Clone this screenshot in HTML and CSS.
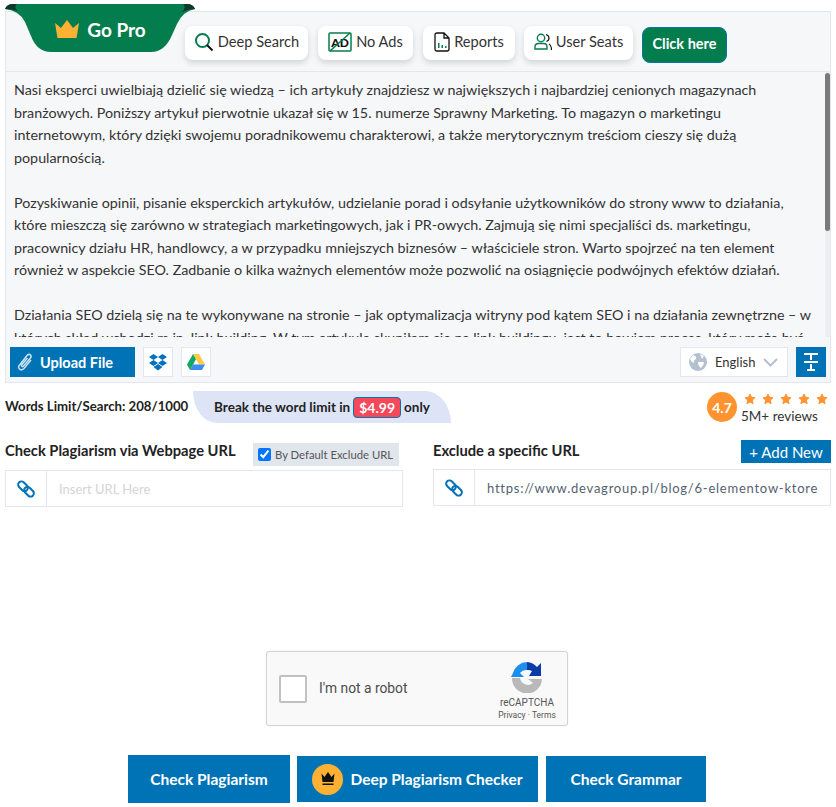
FILE: index.html
```html
<!DOCTYPE html>
<html lang="pl">
<head>
  <meta charset="UTF-8">
  <meta name="viewport" content="width=device-width, initial-scale=1">
  <title>Plagiarism Checker</title>
  <link rel="stylesheet" href="styles.css">
</head>
<body>
  <div class="page">

    <!-- Editor Card -->
    <div class="editor">
      <a class="go-pro" href="#">
        <svg class="go-pro-bg" width="190" height="48" viewBox="0 0 190 48">
          <path d="M0 5 Q2 0 8 0 H182 Q188 0 190 5 Q178 7 172 20 L167 31 Q160 48 146 48 H46 Q32 48 26 32 L20 18 Q15 7 0 5 Z" fill="#047d4e"/>
          <path d="M0 5 Q2 0 8 0 H12 Q8 3 13 7 Q7 5 0 5 Z M190 5 Q188 0 182 0 H178 Q182 3 177 8 Q183 5 190 5 Z" fill="#12372a"/>
        </svg>
        <svg class="go-pro-crown" width="26" height="18" viewBox="0 0 26 18">
          <path d="M1 3 L7 8 L13 0 L19 8 L25 3 L22.500 18 H3.500 Z" fill="#ffb133"/>
        </svg>
        <span>Go Pro</span>
      </a>

      <div class="toolbar">
        <a class="tool tool-search" href="#">
          <svg width="20" height="20" viewBox="0 0 20 20">
            <circle cx="8.500" cy="8.500" r="6.500" fill="none" stroke="#047d4e" stroke-width="2"/>
            <path d="M13 13 L18.500 18.500" stroke="#111" stroke-width="2"/>
          </svg>
          Deep Search
        </a>
        <a class="tool tool-ads" href="#">
          <svg width="24" height="20" viewBox="0 0 24 20">
            <rect x="1" y="1" width="22" height="18" rx="1" fill="#fff" stroke="#047d4e" stroke-width="1.500"/>
            <text x="12" y="14.500" text-anchor="middle" class="ad-mark">AD</text>
            <path d="M2 19 L22 1" stroke="#047d4e" stroke-width="1.500"/>
          </svg>
          No Ads
        </a>
        <a class="tool tool-reports" href="#">
          <svg width="16" height="20" viewBox="0 0 16 20">
            <path d="M1 3 Q1 1 3 1 H10 L15 6 V17 Q15 19 13 19 H3 Q1 19 1 17 Z M10 1 V6 H15" fill="none" stroke="#111" stroke-width="1.300"/>
            <path d="M4 11 H5.500 V16 H4 Z M7.500 13 H9 V16 H7.500 Z M11 14 H12.500 V16 H11 Z" fill="#047d4e"/>
          </svg>
          Reports
        </a>
        <a class="tool tool-seats" href="#">
          <svg width="18" height="18" viewBox="0 0 18 18">
            <circle cx="7" cy="5" r="3.700" fill="none" stroke="#047d4e" stroke-width="1.400"/>
            <path d="M1 16 V14 Q1 10.500 4.500 10.500 H9.500 Q13 10.500 13 14 V16 Z" fill="none" stroke="#047d4e" stroke-width="1.400"/>
            <path d="M12 1.500 Q15 2.500 15 5 Q15 7.500 12.500 8.500 M15 11 Q17.500 12.500 17.500 17" fill="none" stroke="#111" stroke-width="1.200"/>
          </svg>
          User Seats
        </a>
        <a class="click-here" href="#">Click here</a>
      </div>

      <div class="editor-text">
        <p>Nasi eksperci uwielbiają dzielić się wiedzą – ich artykuły znajdziesz w największych i najbardziej cenionych magazynach branżowych. Poniższy artykuł pierwotnie ukazał się w 15. numerze Sprawny Marketing. To magazyn o marketingu internetowym, który dzięki swojemu poradnikowemu charakterowi, a także merytorycznym treściom cieszy się dużą popularnością.</p>
        <p>Pozyskiwanie opinii, pisanie eksperckich artykułów, udzielanie porad i odsyłanie użytkowników do strony www to działania, które mieszczą się zarówno w strategiach marketingowych, jak i PR-owych. Zajmują się nimi specjaliści ds. marketingu, pracownicy działu HR, handlowcy, a w przypadku mniejszych biznesów – właściciele stron. Warto spojrzeć na ten element również w aspekcie SEO. Zadbanie o kilka ważnych elementów może pozwolić na osiągnięcie podwójnych efektów działań.</p>
        <p>Działania SEO dzielą się na te wykonywane na stronie – jak optymalizacja witryny pod kątem SEO i na działania zewnętrzne – w których skład wchodzi m.in. link building. W tym artykule skupiłam się na link buildingu, jest to bowiem proces, który może być</p>
        <div class="scroll-track"><div class="scroll-thumb"></div></div>
      </div>

      <div class="editor-actions">
        <button class="upload-btn" type="button">
          <svg width="16" height="20" viewBox="0 0 16 20">
            <path d="M14 8 L7 16.500 Q4.500 19 2.500 17 Q0.500 15 3 12.500 L10 3.500 Q12 1.500 13.500 3 Q15 4.500 13 6.500 L6.500 14 Q5.500 15 4.800 14.300 Q4 13.500 5 12.500 L10.500 6" fill="none" stroke="#fff" stroke-opacity=".8" stroke-width="1.500"/>
          </svg>
          Upload File
        </button>
        <a class="cloud-btn" href="#">
          <svg width="18" height="17" viewBox="0 0 18 17">
            <path d="M4.500 0 L9 3 L4.500 6 L0 3 Z M13.500 0 L18 3 L13.500 6 L9 3 Z M4.500 6 L9 9 L4.500 12 L0 9 Z M13.500 6 L18 9 L13.500 12 L9 9 Z M4.500 13 L9 10 L13.500 13 L9 16.500 Z" fill="#0070c0"/>
          </svg>
        </a>
        <a class="cloud-btn" href="#">
          <svg width="18" height="16" viewBox="0 0 18 16">
            <path d="M6 0 H12 L18 10.500 H12 Z" fill="#ffcb45"/>
            <path d="M6 0 L9 5.200 L3 16 L0 10.500 Z" fill="#11a861"/>
            <path d="M6 10.500 H18 L15 16 H3 Z" fill="#3b8df0"/>
          </svg>
        </a>
        <div class="lang-select">
          <svg width="18" height="18" viewBox="0 0 18 18">
            <circle cx="9" cy="9" r="9" fill="#b4c0d0"/>
            <path d="M4 2 Q8 3 7 6 Q4 7 5 10 Q2 9 1 6 Z M11 1 L15 3 L13 6 Z M9 9 L15 9 Q15 12 12 15 Q9 13 9 9 Z" fill="#fff"/>
          </svg>
          <span>English</span>
          <svg width="15" height="9" viewBox="0 0 15 9">
            <path d="M1 1 L7.500 7.500 L14 1" fill="none" stroke="#b4c0d0" stroke-width="2"/>
          </svg>
        </div>
        <button class="text-height-btn" type="button">
          <svg width="14" height="18" viewBox="0 0 14 18">
            <path d="M0 0 H14 V2 H0 Z M6 2 H8 V7 H6 Z M0 8 H14 V10 H0 Z M6 11 H8 V16 H6 Z M3 16 H11 V18 H3 Z" fill="#fff"/>
          </svg>
        </button>
      </div>
    </div>

    <!-- Word Limit -->
    <div class="limit-row">
      <span class="words-limit">Words Limit/Search: 208/1000</span>
      <div class="limit-pill">Break the word limit in <span class="price">$4.99</span> only</div>
      <div class="rating">
        <span class="rating-score">4.7</span>
        <div class="rating-info">
          <div class="stars">
            <svg width="12" height="12" viewBox="0 0 12 12"><path d="M6 1 L7.500 4.300 L11 4.700 L8.400 7.100 L9.100 10.700 L6 8.900 L2.900 10.700 L3.600 7.100 L1 4.700 L4.500 4.300 Z" fill="#ff9330" stroke="#ff9330" stroke-linejoin="round"/></svg>
            <svg width="12" height="12" viewBox="0 0 12 12"><path d="M6 1 L7.500 4.300 L11 4.700 L8.400 7.100 L9.100 10.700 L6 8.900 L2.900 10.700 L3.600 7.100 L1 4.700 L4.500 4.300 Z" fill="#ff9330" stroke="#ff9330" stroke-linejoin="round"/></svg>
            <svg width="12" height="12" viewBox="0 0 12 12"><path d="M6 1 L7.500 4.300 L11 4.700 L8.400 7.100 L9.100 10.700 L6 8.900 L2.900 10.700 L3.600 7.100 L1 4.700 L4.500 4.300 Z" fill="#ff9330" stroke="#ff9330" stroke-linejoin="round"/></svg>
            <svg width="12" height="12" viewBox="0 0 12 12"><path d="M6 1 L7.500 4.300 L11 4.700 L8.400 7.100 L9.100 10.700 L6 8.900 L2.900 10.700 L3.600 7.100 L1 4.700 L4.500 4.300 Z" fill="#ff9330" stroke="#ff9330" stroke-linejoin="round"/></svg>
            <svg width="12" height="12" viewBox="0 0 12 12"><path d="M6 1 L7.500 4.300 L11 4.700 L8.400 7.100 L9.100 10.700 L6 8.900 L2.900 10.700 L3.600 7.100 L1 4.700 L4.500 4.300 Z" fill="#ff9330" stroke="#ff9330" stroke-linejoin="round"/></svg>
          </div>
          <div class="reviews">5M+ reviews</div>
        </div>
      </div>
    </div>

    <!-- URL Inputs -->
    <div class="url-grid">
      <div>
        <div class="url-head">
          <h3>Check Plagiarism via Webpage URL</h3>
          <label class="exclude-check"><input type="checkbox" checked> By Default Exclude URL</label>
        </div>
        <div class="url-field">
          <span class="url-icon">
            <svg width="18" height="18" viewBox="0 0 18 18"><rect x="0.500" y="3" width="11" height="6.500" rx="3.200" transform="rotate(45 6 6.250)" fill="none" stroke="#0073b7" stroke-width="2"/><rect x="6.500" y="8.500" width="11" height="6.500" rx="3.200" transform="rotate(45 12 11.750)" fill="none" stroke="#0073b7" stroke-width="2"/></svg>
          </span>
          <input type="text" placeholder="Insert URL Here">
        </div>
      </div>
      <div>
        <div class="url-head">
          <h3>Exclude a specific URL</h3>
          <button class="add-new" type="button">+ Add New</button>
        </div>
        <div class="url-field url-field-right">
          <span class="url-icon">
            <svg width="18" height="18" viewBox="0 0 18 18"><rect x="0.500" y="3" width="11" height="6.500" rx="3.200" transform="rotate(45 6 6.250)" fill="none" stroke="#0073b7" stroke-width="2"/><rect x="6.500" y="8.500" width="11" height="6.500" rx="3.200" transform="rotate(45 12 11.750)" fill="none" stroke="#0073b7" stroke-width="2"/></svg>
          </span>
          <input class="url-value" type="text" value="https://www.devagroup.pl/blog/6-elementow-ktore">
        </div>
      </div>
    </div>

    <!-- Captcha -->
    <div class="captcha">
      <span class="captcha-box"></span>
      <span class="captcha-label">I'm not a robot</span>
      <div class="captcha-brand">
        <svg width="32" height="32" viewBox="0 0 32 32">
          <path d="M16 1 A15 15 0 0 0 2 12 L0 16 H13 L9 12 A8 8 0 0 1 16 9 Z" fill="#1c8fee"/>
          <path d="M16 1 A15 15 0 0 1 26 6 L30 2 V15 H18 L21 10 A8 8 0 0 0 16 9 Z" fill="#0a3ca8"/>
          <path d="M1 17 H9 A8 8 0 0 0 22 22 L17 18 H31 A15 15 0 0 1 1 17 Z" fill="#b9b9b9"/>
        </svg>
        <span class="captcha-name">reCAPTCHA</span>
        <span class="captcha-links">Privacy · Terms</span>
      </div>
    </div>

    <!-- Actions -->
    <div class="actions">
      <button class="action-btn action-tall" type="button">Check Plagiarism</button>
      <button class="action-btn action-deep" type="button">
        <span class="deep-badge">
          <svg width="14" height="14" viewBox="0 0 14 14">
            <path d="M0.500 1.500 L3.500 5 L7 0 L10.500 5 L13.500 1.500 L12.500 10 H1.500 Z M1.500 11.500 H12.500 V13 H1.500 Z" fill="#111"/>
          </svg>
        </span>
        Deep Plagiarism Checker
      </button>
      <button class="action-btn action-grammar" type="button">Check Grammar</button>
    </div>
  </div>
</body>
</html>
```

FILE: styles.css
```css
/* General Styles */
* {
  margin: 0;
  padding: 0;
  box-sizing: border-box;
  font-family: 'Lato', sans-serif;
}

body {
  background-color: #fff;
  color: #333;
}

a {
  text-decoration: none;
}

button {
  border: none;
  cursor: pointer;
}

.page {
  width: 836px;
  height: 807px;
  padding: 11px 5px 0 5px;
  overflow: hidden;
}

/* Editor Card */
.editor {
  position: relative;
  background-color: #f6f7f9;
  border: 1px solid #e3e6ee;
  height: 372px;
}

.go-pro {
  position: absolute;
  left: -1px;
  top: -8px;
  width: 190px;
  height: 48px;
  display: flex;
  align-items: center;
  justify-content: center;
  gap: 7px;
  padding-top: 2px;
  color: #fff;
  font-size: 19px;
  font-weight: 700;
}

.go-pro-bg {
  position: absolute;
  left: 0;
  top: 0;
}

.go-pro-crown,
.go-pro span {
  position: relative;
}

.toolbar {
  height: 60px;
  display: flex;
  align-items: flex-start;
  padding: 14px 0 0 179px;
  border-bottom: 1px solid #e3e6ee;
}

.tool {
  height: 34px;
  display: flex;
  align-items: center;
  justify-content: center;
  gap: 4px;
  margin-right: 10px;
  padding-bottom: 3px;
  background: #fff;
  border-radius: 8px;
  box-shadow: 0 3px 6px rgba(0, 0, 0, 0.14);
  color: #333;
  font-size: 14.600px;
  white-space: nowrap;
}

.tool-search { width: 123px; }
.tool-ads { width: 95px; }
.tool-reports { width: 92px; margin-right: 9px; }
.tool-seats { width: 109px; margin-right: 9px; }

.click-here {
  width: 85px;
  height: 36px;
  margin-top: 1px;
  padding-bottom: 3px;
  display: flex;
  align-items: center;
  justify-content: center;
  background-color: #047d4e;
  border: 1px solid #0a74a8;
  border-radius: 8px;
  color: #fff;
  font-size: 14.500px;
  font-weight: 700;
}

.editor-text {
  position: relative;
  height: 265px;
  padding: 7px 17px 0 8px;
  overflow: hidden;
  font-size: 14.300px;
  line-height: 22.500px;
  color: #333;
}

.editor-text p {
  margin-bottom: 22.500px;
}

.scroll-track {
  position: absolute;
  right: 0;
  top: 0;
  width: 5px;
  height: 100%;
  background-color: #eceef1;
}

.scroll-thumb {
  width: 5px;
  height: 158px;
  margin-top: 1px;
  background-color: #7a7a7a;
  border-radius: 3px;
}

.editor-actions {
  display: flex;
  align-items: center;
  gap: 8px;
  padding: 10px 4px 0 4px;
}

.upload-btn {
  width: 125px;
  height: 30px;
  display: flex;
  align-items: center;
  gap: 7px;
  padding-left: 7px;
  background-color: #0073b7;
  color: #fff;
  font-size: 14.500px;
  font-weight: 700;
}

.cloud-btn {
  width: 30px;
  height: 30px;
  display: flex;
  align-items: center;
  justify-content: center;
  background: #fff;
  border: 1px solid #e3e6ee;
}

.lang-select {
  width: 108px;
  height: 30px;
  margin-left: auto;
  display: flex;
  align-items: center;
  gap: 8px;
  padding: 0 8px;
  background: #fff;
  border: 1px solid #e3e6ee;
  font-size: 13px;
}

.text-height-btn {
  width: 30px;
  height: 30px;
  display: flex;
  align-items: center;
  justify-content: center;
  background-color: #0073b7;
}

/* Word Limit */
.limit-row {
  height: 60px;
  padding: 8px 0 0 0;
  display: flex;
  align-items: flex-start;
}

.words-limit {
  width: 188px;
  margin-top: 7px;
  color: #222;
  font-size: 13.200px;
  font-weight: 700;
  white-space: nowrap;
}

.limit-pill {
  height: 32px;
  width: 258px;
  display: flex;
  align-items: center;
  justify-content: center;
  gap: 3px;
  background-color: #dde4f6;
  border-radius: 0 26px 0 24px / 0 32px 0 32px;
  color: #222;
  font-size: 13.500px;
  font-weight: 700;
  white-space: nowrap;
}

.price {
  padding: 1px 5px;
  background-color: #f5485a;
  border: 1px solid #0a74a8;
  border-radius: 4px;
  color: #fff;
  font-size: 14px;
  font-weight: 700;
}

.rating {
  margin-left: auto;
  display: flex;
  gap: 4px;
  margin-top: 1px;
  margin-right: -1px;
}

.rating-score {
  width: 30px;
  height: 30px;
  display: flex;
  align-items: center;
  justify-content: center;
  background-color: #ff9330;
  border-radius: 50%;
  color: #fff;
  font-size: 14px;
  font-weight: 700;
}

.rating-info {
  width: 91px;
}

.stars {
  height: 16px;
  padding: 1px 0 0 3px;
  display: flex;
  gap: 6px;
}

.reviews {
  font-size: 13.500px;
  line-height: 16px;
  color: #333;
}

/* URL Inputs */
.url-grid {
  display: grid;
  grid-template-columns: 398px 398px;
  column-gap: 30px;
}

.url-head {
  height: 27px;
  display: flex;
  align-items: flex-start;
  justify-content: space-between;
}

.url-head h3 {
  color: #222;
  font-size: 14.700px;
  font-weight: 700;
  margin-top: -2px;
  white-space: nowrap;
}

.exclude-check {
  width: 146px;
  height: 23px;
  margin-right: 4px;
  display: flex;
  align-items: center;
  gap: 4px;
  padding-left: 5px;
  background-color: #e1e5ec;
  color: #555;
  font-size: 11.300px;
  white-space: nowrap;
}

.add-new {
  width: 90px;
  height: 23px;
  margin-top: -3px;
  background-color: #0073b7;
  color: #fff;
  font-size: 15px;
}

.url-field {
  height: 37px;
  display: flex;
  background: #fff;
  border: 1px solid #e3e6ee;
}

.url-field-right {
  margin-top: -1px;
}

.url-icon {
  width: 41px;
  display: flex;
  align-items: center;
  justify-content: center;
  border-right: 1px solid #e3e6ee;
}

.url-field input[type="text"] {
  flex: 1;
  min-width: 0;
  padding-left: 12px;
  border: none;
  outline: none;
  font-size: 13px;
}

.url-field input::placeholder {
  color: #d5d5d5;
}

.url-field .url-value {
  color: #555f70;
  font-size: 15.500px;
  letter-spacing: 0.760px;
}

/* Captcha */
.captcha {
  width: 302px;
  height: 75px;
  margin: 144px 0 0 261px;
  display: flex;
  align-items: center;
  padding-left: 12px;
  background-color: #f9f9f9;
  border: 1px solid #d3d3d3;
  border-radius: 3px;
  box-shadow: 0 0 2px rgba(0, 0, 0, 0.08);
}

.captcha-box {
  width: 28px;
  height: 28px;
  margin-right: 12px;
  background: #fff;
  border: 2px solid #c1c1c1;
  border-radius: 2px;
}

.captcha-label {
  margin-bottom: 2px;
  font-family: 'Roboto', sans-serif;
  font-size: 13.800px;
  color: #4c4c4c;
}

.captcha-brand {
  width: 70px;
  margin-left: auto;
  margin-right: 5px;
  padding-top: 5px;
  display: flex;
  flex-direction: column;
  align-items: center;
}

.captcha-name {
  margin-top: 3px;
  font-family: 'Roboto', sans-serif;
  font-size: 10px;
  line-height: 13px;
  color: #555;
}

.captcha-links {
  font-family: 'Roboto', sans-serif;
  font-size: 8.500px;
  line-height: 13px;
  color: #555;
}

/* Actions */
.actions {
  display: flex;
  align-items: center;
  margin: 29px 0 0 123px;
}

.action-btn {
  height: 46px;
  display: flex;
  align-items: center;
  justify-content: center;
  background-color: #0073b7;
  color: #fff;
  font-size: 15.500px;
  font-weight: 700;
}

.action-tall {
  width: 162px;
  height: 48px;
  margin-right: 7px;
}

.action-deep {
  width: 241px;
  gap: 7px;
  margin-right: 8px;
}

.action-grammar {
  width: 160px;
}

.deep-badge {
  width: 31px;
  height: 31px;
  display: flex;
  align-items: center;
  justify-content: center;
  background-color: #ffb133;
  border-radius: 50%;
}

.ad-mark {
  font-size: 12px;
  font-weight: 900;
  fill: #111;
}
```
